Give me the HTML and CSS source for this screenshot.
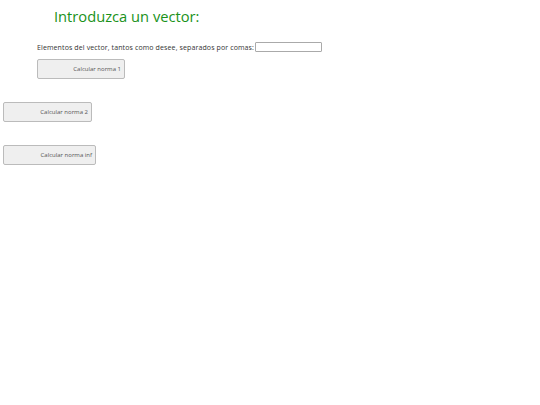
FILE: index.html
```html
<!DOCTYPE html>
<html lang="es">
<head>
<meta charset="utf-8">
<title>Normas de un vector</title>
<link rel="stylesheet" href="styles.css">
</head>
<body>
<h1 class="title">Introduzca un vector:</h1>
<div class="form-row">
  <label class="label" for="vec">Elementos del vector, tantos como desee, separados por comas:</label><input class="input" id="vec" type="text">
</div>
<div class="btn-row first"><button class="btn btn-1">Calcular norma 1</button></div>
<div class="btn-row"><button class="btn btn-2">Calcular norma 2</button></div>
<div class="btn-row"><button class="btn btn-3">Calcular norma inf</button></div>
</body>
</html>
```

FILE: styles.css
```css
html, body {
  margin: 0;
  padding: 0;
  background: #fff;
}
body {
  font-family: "Open Sans", "Liberation Sans", sans-serif;
  color: #333;
  padding: 7px 0 0 3px;
}
.title {
  margin: 0 0 0 51px;
  font-size: 14.7px;
  font-weight: 500;
  color: #1a921a;
  line-height: 19px;
  letter-spacing: 0;
}
.form-row {
  margin: 16px 0 0 34px;
  display: flex;
  align-items: center;
}
.label {
  font-size: 7px;
  letter-spacing: 0.12px;
  color: #333;
}
.input {
  box-sizing: border-box;
  width: 67px;
  height: 10px;
  margin: 0 0 0 1px;
  border: 1px solid #aaa;
  border-radius: 1px;
  padding: 0;
}
.btn-row {
  margin-top: 23px;
}
.btn-row.first {
  margin: 7px 0 0 34px;
}
.btn {
  display: block;
  box-sizing: border-box;
  height: 20px;
  background: #efefef;
  border: 1px solid #bbb;
  border-radius: 2px;
  font-family: inherit;
  font-size: 6px;
  color: #555;
  text-align: right;
  padding: 0 3px 0 0;
}
.btn-1 { width: 88px; }
.btn-2 { width: 89px; }
.btn-3 { width: 93px; }
```
